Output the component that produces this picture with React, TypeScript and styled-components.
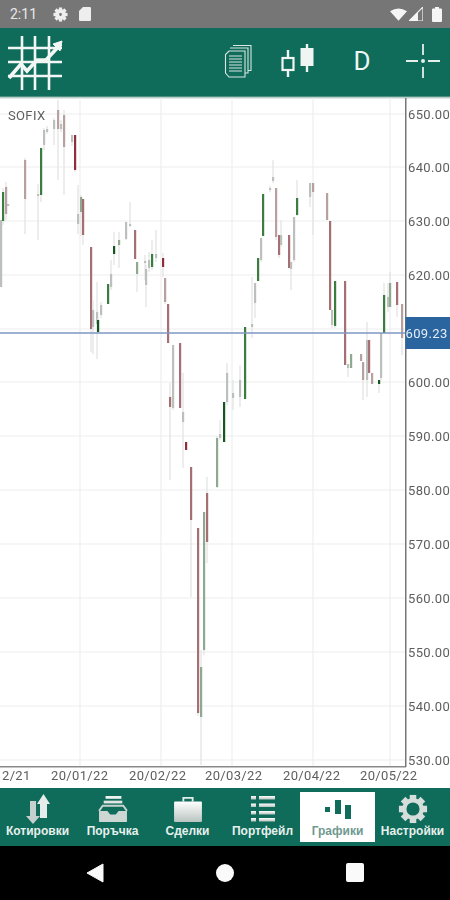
import React from 'react'
import styled, { createGlobalStyle } from 'styled-components'

const GlobalStyle = createGlobalStyle`
  html, body {
    margin: 0;
    padding: 0;
    background: #000;
  }
  * {
    box-sizing: border-box;
  }
`

type Kind = 'gray' | 'rose' | 'wine' | 'red' | 'sage' | 'green' | 'dark'
// x, body top, body bottom, wick top, wick bottom, colour
type Candle = [number, number, number, number, number, Kind]

const colours: Record<Kind, string> = {
  gray: '#bcc0bc',
  rose: '#b9a0a0',
  wine: '#a56f73',
  red: '#8e2f3c',
  sage: '#8fa890',
  green: '#3a7d3e',
  dark: '#14561f',
}

const candles: Candle[] = [
  [1, 220, 287, 220, 287, 'gray'],
  [3, 192, 221, 188, 225, 'green'],
  [6, 187, 214, 182, 220, 'rose'],
  [8, 204, 206, 204, 206, 'gray'],
  [25, 160, 199, 158, 234, 'rose'],
  [38, 194, 196, 184, 240, 'gray'],
  [41, 148, 195, 148, 202, 'green'],
  [44, 130, 145, 128, 150, 'gray'],
  [47, 129, 132, 126, 134, 'gray'],
  [54, 120, 129, 118, 145, 'gray'],
  [58, 110, 129, 100, 180, 'rose'],
  [61, 124, 129, 120, 132, 'gray'],
  [64, 115, 147, 110, 195, 'rose'],
  [72, 135, 142, 135, 146, 'gray'],
  [75, 135, 170, 135, 172, 'red'],
  [78, 214, 224, 185, 234, 'gray'],
  [81, 197, 212, 195, 236, 'sage'],
  [83, 199, 235, 199, 245, 'wine'],
  [91, 247, 329, 247, 352, 'wine'],
  [93, 310, 327, 300, 354, 'gray'],
  [97, 312, 324, 282, 359, 'gray'],
  [98, 320, 332, 318, 334, 'dark'],
  [101, 305, 315, 302, 318, 'gray'],
  [108, 284, 304, 284, 304, 'green'],
  [111, 274, 287, 260, 290, 'gray'],
  [114, 246, 254, 232, 265, 'dark'],
  [119, 240, 245, 232, 268, 'sage'],
  [126, 222, 239, 222, 240, 'gray'],
  [130, 224, 226, 202, 227, 'gray'],
  [135, 230, 259, 230, 259, 'wine'],
  [137, 262, 274, 262, 292, 'sage'],
  [145, 261, 263, 255, 280, 'gray'],
  [146, 269, 285, 265, 307, 'gray'],
  [149, 260, 268, 252, 272, 'gray'],
  [152, 254, 267, 240, 270, 'green'],
  [156, 254, 258, 230, 262, 'gray'],
  [163, 258, 267, 253, 277, 'red'],
  [165, 278, 302, 278, 304, 'rose'],
  [168, 304, 343, 304, 343, 'wine'],
  [170, 397, 407, 383, 480, 'wine'],
  [173, 345, 408, 345, 410, 'gray'],
  [180, 343, 408, 343, 408, 'wine'],
  [183, 412, 422, 373, 468, 'gray'],
  [186, 442, 450, 442, 450, 'red'],
  [191, 467, 520, 467, 597, 'wine'],
  [198, 528, 713, 528, 716, 'wine'],
  [201, 667, 717, 650, 765, 'sage'],
  [204, 512, 650, 512, 655, 'sage'],
  [207, 493, 542, 477, 563, 'wine'],
  [217, 438, 487, 436, 488, 'sage'],
  [220, 434, 438, 420, 440, 'gray'],
  [224, 402, 442, 402, 442, 'dark'],
  [227, 373, 402, 363, 405, 'gray'],
  [233, 393, 398, 380, 410, 'gray'],
  [240, 380, 397, 365, 407, 'gray'],
  [245, 327, 399, 327, 399, 'green'],
  [252, 324, 327, 277, 338, 'gray'],
  [255, 283, 303, 283, 318, 'gray'],
  [258, 258, 281, 258, 281, 'green'],
  [261, 238, 260, 238, 262, 'gray'],
  [263, 194, 236, 194, 236, 'green'],
  [270, 188, 190, 186, 192, 'gray'],
  [273, 177, 181, 160, 183, 'gray'],
  [276, 188, 237, 188, 240, 'rose'],
  [279, 235, 255, 235, 258, 'wine'],
  [281, 235, 245, 220, 247, 'gray'],
  [289, 235, 268, 235, 268, 'wine'],
  [291, 262, 269, 262, 290, 'gray'],
  [294, 217, 260, 217, 262, 'gray'],
  [297, 198, 215, 180, 216, 'green'],
  [310, 183, 197, 183, 207, 'gray'],
  [313, 183, 192, 183, 235, 'rose'],
  [327, 193, 220, 193, 220, 'rose'],
  [330, 221, 310, 221, 310, 'wine'],
  [332, 310, 325, 310, 328, 'gray'],
  [335, 281, 326, 281, 328, 'green'],
  [345, 281, 365, 281, 365, 'wine'],
  [348, 364, 368, 364, 377, 'gray'],
  [351, 354, 368, 354, 368, 'sage'],
  [361, 354, 361, 354, 361, 'rose'],
  [363, 362, 380, 362, 400, 'rose'],
  [367, 340, 380, 322, 397, 'gray'],
  [369, 340, 373, 340, 373, 'wine'],
  [372, 373, 384, 373, 384, 'rose'],
  [379, 380, 384, 380, 393, 'dark'],
  [381, 333, 378, 333, 380, 'gray'],
  [384, 295, 333, 283, 333, 'green'],
  [388, 297, 307, 283, 312, 'gray'],
  [390, 283, 307, 272, 307, 'sage'],
  [397, 282, 305, 282, 317, 'wine'],
  [402, 304, 338, 304, 355, 'rose'],
]

const priceLevels = [
  [114, '650.00'],
  [167, '640.00'],
  [221, '630.00'],
  [275, '620.00'],
  [382, '600.00'],
  [436, '590.00'],
  [490, '580.00'],
  [544, '570.00'],
  [598, '560.00'],
  [652, '550.00'],
  [706, '540.00'],
  [760, '530.00'],
] as const

const gridRows = [114, 167, 221, 275, 329, 382, 436, 490, 544, 598, 652, 706, 760]
const gridCols = [80, 161, 232, 313, 390]

const dates = [
  [2, '2/21'],
  [51, '20/01/22'],
  [129, '20/02/22'],
  [205, '20/03/22'],
  [283, '20/04/22'],
  [360, '20/05/22'],
] as const

const Screen = styled.div`
  width: 450px;
  height: 900px;
  display: flex;
  flex-direction: column;
  overflow: hidden;
  font-family: Roboto, 'Liberation Sans', sans-serif;
`

const StatusBar = styled.div`
  height: 28px;
  background: #767676;
  display: flex;
  align-items: center;
  padding: 0 8px 0 10px;
  color: #e8e8e8;
`

const Clock = styled.span`
  font-size: 14px;
  width: 43px;
`

const StatusGroup = styled.div<{ $right?: boolean }>`
  display: flex;
  align-items: center;
  gap: ${(p) => (p.$right ? '2px' : '11px')};
  margin-left: ${(p) => (p.$right ? 'auto' : '0')};
`

const CellSignal = styled.svg`
  margin-right: 7px;
`

const Toolbar = styled.div`
  height: 69px;
  background: #0f6b5a;
  border-bottom: 1px solid #4f8f82;
  display: flex;
  align-items: center;
  padding: 0 10px 3px 6px;
  color: #eef5f3;
`

const ToolGroup = styled.div`
  margin-left: auto;
  display: flex;
  align-items: center;
  gap: 28px;
`

const LogoMark = styled.svg`
  margin-top: 4px;
`

const PeriodButton = styled.span`
  font-size: 26px;
  width: 32px;
  text-align: center;
  margin-left: 2px;
`

const ChartSvg = styled.svg`
  display: block;
  flex: none;
  background: #fff;
  filter: blur(0.45px);

  text {
    font-family: Roboto, 'Liberation Sans', sans-serif;
    font-size: 13px;
    fill: #5e5e5e;
    letter-spacing: 0.35px;
  }
`

const TabBar = styled.div`
  height: 58px;
  background: #0f6b5a;
  display: grid;
  grid-template-columns: repeat(6, 75px);
  padding: 4px 0;
`

const Tab = styled.div<{ $active?: boolean }>`
  display: flex;
  flex-direction: column;
  align-items: center;
  justify-content: space-between;
  padding: 1px 0 4px;
  background: ${(p) => (p.$active ? '#fff' : 'transparent')};
  color: ${(p) => (p.$active ? '#6f9a90' : '#e6f0ed')};
  font-family: 'Liberation Sans', Arial, sans-serif;
  font-size: 12px;
  line-height: 13px;
  font-weight: 700;
  white-space: nowrap;
`

const TabIconBox = styled.div`
  height: 32px;
  display: flex;
  align-items: center;
  justify-content: center;
`

const NavBar = styled.div`
  flex: 1;
  background: #000;
  display: grid;
  grid-template-columns: 190px 70px 190px;
  align-items: center;
  justify-items: center;
  padding-bottom: 1px;
`

const NavCircle = styled.span`
  width: 18px;
  height: 18px;
  border-radius: 50%;
  background: #fafafa;
`

const NavSquare = styled.span`
  width: 18px;
  height: 19px;
  border-radius: 2px;
  background: #fafafa;
`

const Logo = () => (
  <LogoMark width="58" height="58" viewBox="0 0 58 58" fill="none" stroke="#f2f7f5">
    <g strokeWidth="2.6">
      <path d="M16 2v54M29 2v54M43 2v54" />
      <path d="M2 14h54M2 28h54M2 42h54" />
    </g>
    <path d="M3 44 L15 30 L21 37 L31 26 L40 26 L55 10" strokeWidth="3.6" />
    <path d="M56 7 L47 10 L54 17 Z" fill="#f2f7f5" strokeWidth="1" />
  </LogoMark>
)

const DocsIcon = () => (
  <svg width="28" height="34" viewBox="0 0 28 34" fill="none" stroke="#d9e6e2" strokeWidth="1.1">
    <path d="M9 1.500h18v25H24" />
    <path d="M6 4h18v25h-3" />
    <path d="M5 7h16v26H5L1.500 29V10.500z" fill="#0f6b5a" />
    <path d="M5 12h13M5 15h13M5 18h13M5 21h13M5 24h13M5 27h13" />
  </svg>
)

const CandleIcon = () => (
  <svg width="36" height="34" viewBox="0 0 36 34" fill="none">
    <path d="M8 6v8M8 26v7" stroke="#eef5f3" strokeWidth="2.4" />
    <rect x="2.500" y="14" width="11" height="12" stroke="#eef5f3" strokeWidth="2.2" />
    <path d="M27 0v28" stroke="#eef5f3" strokeWidth="2.4" />
    <rect x="20.500" y="4" width="13" height="18" fill="#eef5f3" />
  </svg>
)

const CrossIcon = () => (
  <svg width="34" height="34" viewBox="0 0 34 34" stroke="#e4efec" strokeWidth="1.8">
    <path d="M0 17h12M22 17h12M17 0v11M17 23v11" />
    <circle cx="17" cy="17" r="2" fill="#e4efec" stroke="none" />
  </svg>
)

const GearGlyph = ({ size, fill, hole }: { size: number; fill: string; hole: number }) => (
  <svg width={size} height={size} viewBox="0 0 32 32" fill="none">
    <circle cx="16" cy="16" r={(11.5 + hole) / 2} stroke={fill} strokeWidth={11.5 - hole} />
    {[0, 45, 90, 135, 180, 225, 270, 315].map((deg) => (
      <rect key={deg} x="12.500" y="1" width="7" height="6" fill={fill} transform={`rotate(${deg} 16 16)`} />
    ))}
  </svg>
)

const StatusIcons = () => (
  <StatusGroup>
    <GearGlyph size={15} fill="#eeeeee" hole={3} />
    <svg width="12" height="14" viewBox="0 0 12 14">
      <path d="M4 0h7a1 1 0 0 1 1 1v12a1 1 0 0 1-1 1H1a1 1 0 0 1-1-1V4z" fill="#eeeeee" />
    </svg>
  </StatusGroup>
)

const StatusRight = () => (
  <StatusGroup $right>
    <svg width="17" height="13" viewBox="0 0 19 14">
      <path d="M0 3.500Q9.500-3 19 3.500L9.500 14z" fill="#f5f5f5" />
    </svg>
    <CellSignal width="14" height="14" viewBox="0 0 14 14">
      <path d="M14 0v14H0z" fill="none" stroke="#f5f5f5" strokeWidth="1.2" />
      <path d="M9 5v9H0l9-9z" fill="#f5f5f5" />
    </CellSignal>
    <svg width="10" height="15" viewBox="0 0 10 15">
      <path d="M3 0h4v1.500h2a1 1 0 0 1 1 1V14a1 1 0 0 1-1 1H1a1 1 0 0 1-1-1V2.500a1 1 0 0 1 1-1h2z" fill="#f5f5f5" />
    </svg>
  </StatusGroup>
)

const PriceChart = () => (
  <ChartSvg width="450" height="691" viewBox="0 97 450 691">
    <rect x="0" y="97" width="450" height="1.500" fill="#b9cfc9" />
    <g stroke="#eeeeee" strokeWidth="1.2">
      {gridRows.map((y) => (
        <line key={y} x1="0" x2="405" y1={y} y2={y} />
      ))}
      {gridCols.map((x) => (
        <line key={x} x1={x} x2={x} y1="98" y2="766" />
      ))}
    </g>
    {candles.map(([x, top, bottom, wickTop, wickBottom, kind], i) => (
      <g key={i}>
        <line x1={x} x2={x} y1={wickTop} y2={wickBottom} stroke="#e4e4e4" strokeWidth="1.3" />
        <rect x={x - 1} y={top} width="2.200" height={bottom - top} fill={colours[kind]} />
      </g>
    ))}
    <line x1="0" x2="405" y1="333" y2="333" stroke="#7f97c4" strokeWidth="1.3" />
    <rect x="0" y="766" width="406" height="1.500" fill="#8a8a8a" />
    <rect x="405" y="98" width="1.500" height="669" fill="#777777" />
    <text x="8" y="120">SOFIX</text>
    {priceLevels.map(([y, label]) => (
      <text key={label} x="408" y={y + 4.500}>{label}</text>
    ))}
    <rect x="405.500" y="317" width="45" height="32" fill="#2a659f" />
    <text x="405.500" y="337.500" style={{ fill: '#e6eef6' }}>609.23</text>
    {dates.map(([x, label]) => (
      <text key={label} x={x} y="780">{label}</text>
    ))}
  </ChartSvg>
)

const shade = 'url(#tabShade)'

const QuotesIcon = () => (
  <svg width="26" height="30" viewBox="0 0 26 30">
    <defs>
      <linearGradient id="tabShade" x1="0" y1="0" x2="0" y2="1">
        <stop offset="0" stopColor="#ffffff" />
        <stop offset="1" stopColor="#b9c4c1" />
      </linearGradient>
    </defs>
    <path d="M15 10h-3L18.500 0 25 10h-3v14h-7z" fill="#e6ecea" />
    <path d="M5 7h6v15h4l-7 8-7-8h4z" fill="#c6d0cd" />
  </svg>
)

const TrayIcon = () => (
  <svg width="30" height="27" viewBox="0 0 32 29" fill="none" stroke="#c9d4d1" strokeWidth="2">
    <path d="M8 1.500h17" strokeWidth="3" stroke="#eef3f1" />
    <path d="M6 6.500h20" strokeWidth="3" stroke="#dfe6e4" />
    <path d="M1 16 L5 10.500h22l4 5.500" />
    <path d="M1 16h9l3 4h6l3-4h9v11a1 1 0 0 1-1 1H2a1 1 0 0 1-1-1z" fill="#ccd6d3" stroke="none" />
  </svg>
)

const CaseIcon = () => (
  <svg width="30" height="26" viewBox="0 0 32 28" fill="none">
    <path d="M11 6V2h10v4" stroke="#e6ecea" strokeWidth="2" />
    <path d="M2 6h28a1 1 0 0 1 1 1v20a1 1 0 0 1-1 1H2a1 1 0 0 1-1-1V7a1 1 0 0 1 1-1z" fill={shade} />
  </svg>
)

const ListIcon = () => (
  <svg width="24" height="26" viewBox="0 0 24 26" fill={shade}>
    {[0, 7.5, 15, 22].map((y) => (
      <g key={y}>
        <rect x="0" y={y} width="5" height="3.500" />
        <rect x="8" y={y} width="16" height="3.500" />
      </g>
    ))}
  </svg>
)

const BarsIcon = () => (
  <svg width="26" height="19" viewBox="0 0 26 19" fill="#0f6b5a">
    <rect x="0" y="7" width="5" height="5" />
    <rect x="10" y="0" width="6" height="14" />
    <rect x="20" y="5" width="6" height="14" />
  </svg>
)

const tabs = [
  { label: 'Котировки', icon: <QuotesIcon /> },
  { label: 'Поръчка', icon: <TrayIcon /> },
  { label: 'Сделки', icon: <CaseIcon /> },
  { label: 'Портфейл', icon: <ListIcon /> },
  { label: 'Графики', icon: <BarsIcon />, active: true },
  { label: 'Настройки', icon: <GearGlyph size={30} fill="#d5dedb" hole={7} /> },
]

const App = () => (
  <Screen>
    <GlobalStyle />
    <StatusBar>
      <Clock>2:11</Clock>
      <StatusIcons />
      <StatusRight />
    </StatusBar>
    <Toolbar>
      <Logo />
      <ToolGroup>
        <DocsIcon />
        <CandleIcon />
        <PeriodButton>D</PeriodButton>
        <CrossIcon />
      </ToolGroup>
    </Toolbar>
    <PriceChart />
    <TabBar>
      {tabs.map((tab) => (
        <Tab key={tab.label} $active={tab.active}>
          <TabIconBox>{tab.icon}</TabIconBox>
          <span>{tab.label}</span>
        </Tab>
      ))}
    </TabBar>
    <NavBar>
      <svg width="18" height="20" viewBox="0 0 18 20">
        <path d="M17 1v18L1 10z" fill="#fafafa" stroke="#fafafa" strokeLinejoin="round" />
      </svg>
      <NavCircle />
      <NavSquare />
    </NavBar>
  </Screen>
)

export default App
